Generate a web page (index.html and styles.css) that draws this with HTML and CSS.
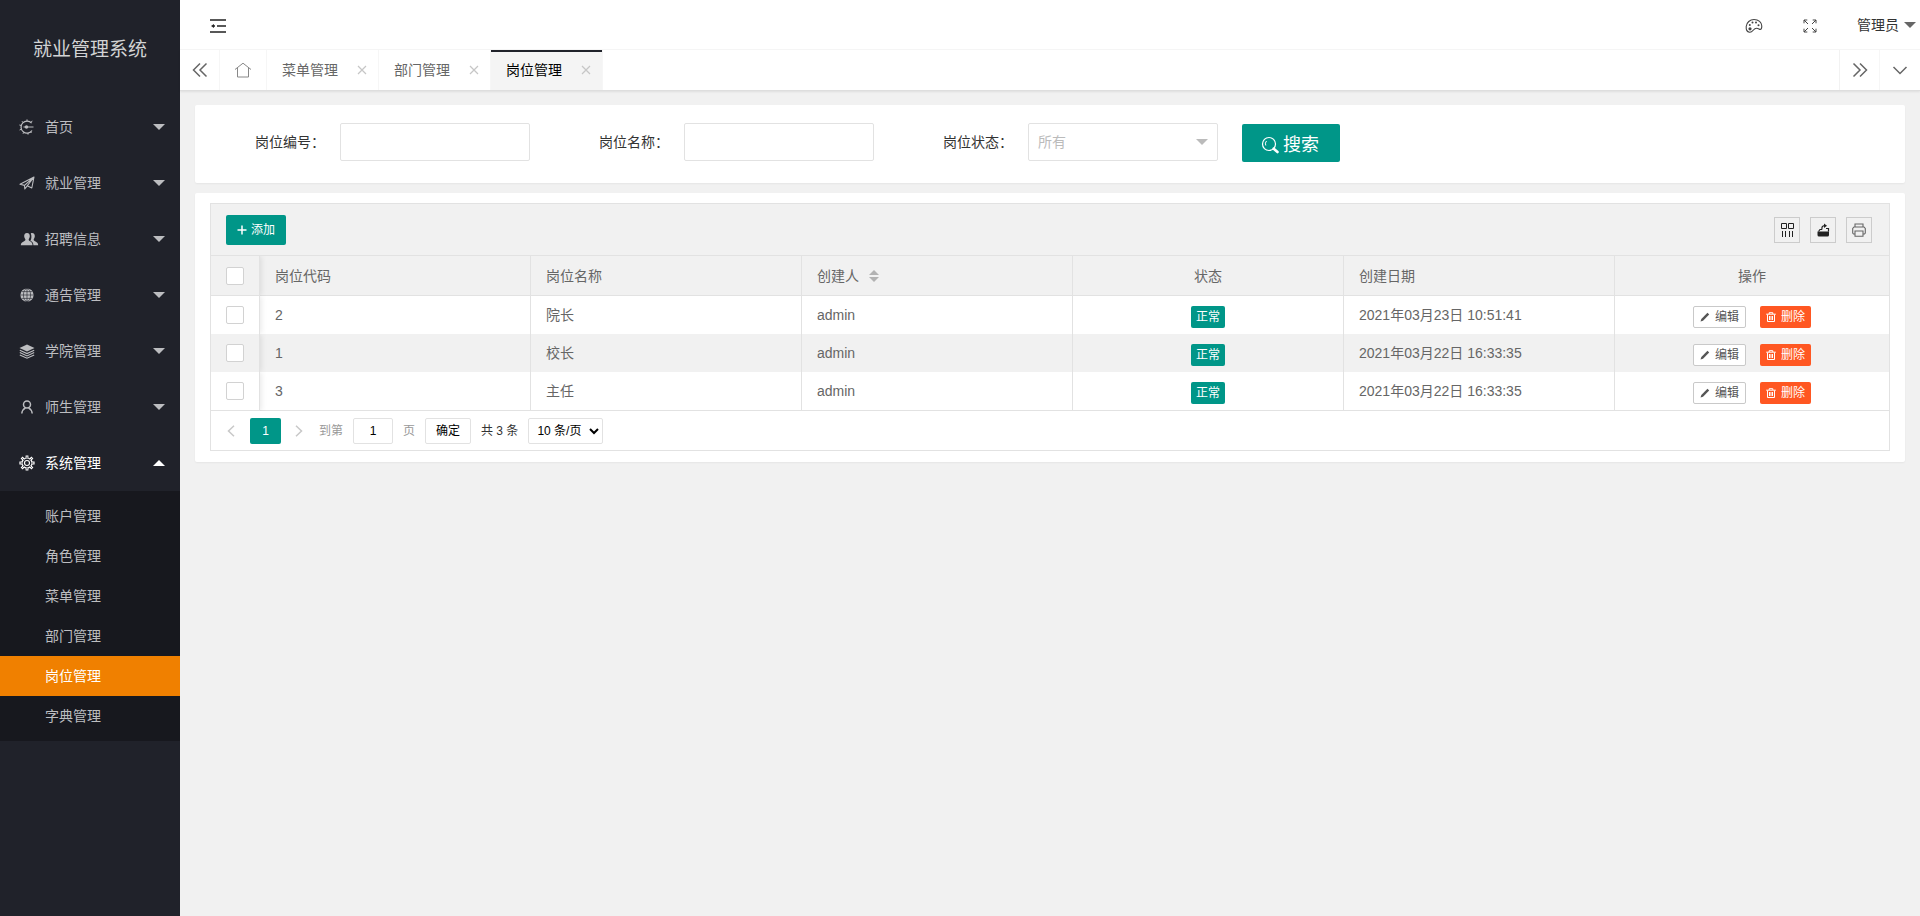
FILE: index.html
```html
<!DOCTYPE html>
<html lang="zh-CN">
<head>
<meta charset="utf-8">
<title>就业管理系统</title>
<link rel="stylesheet" href="styles.css">
</head>
<body>
<svg class="sprite" aria-hidden="true">
  <symbol id="i-home" viewBox="0 0 16 16"><path d="M12.600 4.200A6 6 0 1 0 13 11.500M4.500 8h10" fill="none" stroke="currentColor" stroke-width="1.200"/><path d="M8 .4v2M3 2.200l1 1.300M.4 6l1.800.5M.6 11l1.700-.8M4 14.800l.8-1.500M9 15.600v-1.800M13.200 1.800l-1 1.500M12.500 14l-1-1.200" stroke="currentColor"/><circle cx="7.500" cy="8" r="1.700" fill="currentColor"/></symbol>
  <symbol id="i-plane" viewBox="0 0 16 16"><path d="M1 9.300 15 2l-2.200 11-4.600-2.200L5.800 14l-.3-3.600zM5.500 10.400 15 2 8.200 10.800" fill="none" stroke="currentColor" stroke-width="1.100" stroke-linejoin="round"/></symbol>
  <symbol id="i-users" viewBox="0 0 20 16"><path d="M8 2c2.100 0 3 1.600 2.800 3.600-.1 1.200-.6 2-1.100 2.700 0 1 .2 1.500 1.300 2 1.500.7 2.500 1.700 2.500 4H1.800c0-2.500 1.500-3.100 3.300-4 1.100-.5 1.300-1 1.300-2-.6-.7-1.100-1.500-1.200-2.700C5 3.600 5.900 2 8 2z" fill="currentColor"/><path d="M11.800 2.400c.4-.3.700-.4 1.200-.4 2.100 0 3 1.600 2.800 3.600-.1 1.200-.6 2-1.100 2.700 0 1 .2 1.500 1.300 2 1.900.9 3.200 1.500 3.200 4h-4.800c0-2.300-1-3.600-3-4.500 1.200-1.800 1.400-5.400.4-7.400z" fill="currentColor"/></symbol>
  <symbol id="i-globe" viewBox="0 0 16 16"><circle cx="8" cy="8" r="6.600" fill="currentColor"/><path d="M8 1.400v13.200M1.400 8h13.200M2.500 4.600h11M2.500 11.400h11" stroke="#20222a" stroke-width=".6"/><ellipse cx="8" cy="8" rx="3.600" ry="6.500" fill="none" stroke="#20222a" stroke-width=".6"/></symbol>
  <symbol id="i-layers" viewBox="0 0 16 16"><path d="M8 1.500 15.500 5 8 8.500.5 5z" fill="currentColor"/><path d="m.8 7.300 7.200 3.300 7.200-3.300M.8 9.600 8 12.900l7.200-3.300M.8 11.900 8 15.200l7.200-3.300" fill="none" stroke="currentColor" stroke-width="1.100"/></symbol>
  <symbol id="i-user" viewBox="0 0 16 16"><circle cx="8" cy="5.500" r="3.500" fill="none" stroke="currentColor" stroke-width="1.500"/><path d="M2.800 14.500c.3-3 1.800-4.700 3.700-5.700M13.200 14.500c-.3-3-1.800-4.700-3.700-5.700" fill="none" stroke="currentColor" stroke-width="1.500"/></symbol>
  <symbol id="i-gear" viewBox="0 0 16 16"><path d="M8 .4v2.800M8 12.800v2.800M.4 8h2.800M12.800 8h2.800M2.600 2.600l2 2M11.400 11.400l2 2M2.600 13.400l2-2M11.400 4.600l2-2" stroke="currentColor" stroke-width="2.800"/><circle cx="8" cy="8" r="5" fill="none" stroke="currentColor" stroke-width="1.200"/><path d="M8 1.500v2M8 12.500v2M1.500 8h2M12.500 8h2M3.400 3.400l1.400 1.400M11.200 11.200l1.400 1.400M3.400 12.600l1.400-1.400M11.200 4.800l1.400-1.400" stroke="#20222a" stroke-width=".9"/><circle cx="8" cy="8" r="2.500" fill="none" stroke="currentColor" stroke-width="1.100"/></symbol>
  <symbol id="i-fold" viewBox="0 0 16 14"><path d="M0 1h16M7 7h9M0 13h16" stroke="currentColor" stroke-width="1.500"/><path d="M1 7l3-2v4zM3 6.300h2v1.400H3z" fill="currentColor"/></symbol>
  <symbol id="i-palette" viewBox="0 0 18 16"><path d="M4.500 14.200C1.800 13.800 1 11 1.200 8.500 1.500 4.500 5 1.500 9 1.500c4.500 0 7.800 3 7.800 6.500 0 2-.8 3.500-1.600 3.500-1 0-1.700-1.300-3.700-1.300-3.300 0-3.500 4.500-7 4z" fill="none" stroke="currentColor" stroke-width="1.100"/><circle cx="5" cy="10.800" r="1.600" fill="currentColor"/><circle cx="4.800" cy="7" r="1" fill="currentColor"/><circle cx="7.500" cy="4.500" r="1" fill="currentColor"/><circle cx="11" cy="4.500" r="1" fill="currentColor"/><circle cx="13.500" cy="7.300" r="1" fill="currentColor"/></symbol>
  <symbol id="i-full" viewBox="0 0 14 14"><path d="M1 4.300V1h3.300M1 1l4 4M9.700 1H13v3.300M13 1 9 5M1 9.700V13h3.300M1 13l4-4M13 9.700V13H9.700M13 13 9 9" fill="none" stroke="currentColor"/></symbol>
  <symbol id="i-dleft" viewBox="0 0 16 16"><path d="M8 1.500 1.500 8 8 14.500M14.500 1.500 8 8l6.500 6.500" fill="none" stroke="currentColor" stroke-width="1.500"/></symbol>
  <symbol id="i-down" viewBox="0 0 16 16"><path d="M1.500 5 8 11.500 14.500 5" fill="none" stroke="currentColor" stroke-width="1.500"/></symbol>
  <symbol id="i-house" viewBox="0 0 18 16"><path d="M1 7.500 9 1.200l8 6.300M3.500 6v9h11V6" fill="none" stroke="currentColor"/></symbol>
  <symbol id="i-search" viewBox="0 0 18 18"><circle cx="8" cy="8" r="6.500" fill="none" stroke="currentColor" stroke-width="1.200"/><path d="M4.800 9.500A4 4 0 0 1 5.500 5" fill="none" stroke="currentColor"/><path d="m12.700 12.700 3.800 3.300" stroke="currentColor" stroke-width="2.600" stroke-linecap="round"/></symbol>
  <symbol id="i-plus" viewBox="0 0 10 10"><path d="M5 .5v9M.5 5h9" stroke="currentColor" stroke-width="1.500"/></symbol>
  <symbol id="i-cols" viewBox="0 0 14 14"><path d="M1.500 .5h5v5h-5zM8.500 .5h5v5h-5zM2.500 8v6M5.500 8v6M9.500 8v6M12.500 8v6" fill="none" stroke="currentColor"/></symbol>
  <symbol id="i-export" viewBox="0 0 14 14"><path d="M1.500 8.500h11.500v3.500q0 1.500-1.500 1.500H3Q1.500 13.500 1.500 12z" fill="currentColor"/><path d="M2.500 8.500 4 6.500h2M12.500 8.500v-3h-2.500M6 6.500C5.500 4 6.500 2.800 8.500 2.600" fill="none" stroke="currentColor" stroke-width="1.200"/><path d="M8 .5 11 2.800 8 5z" fill="currentColor"/></symbol>
  <symbol id="i-print" viewBox="0 0 14 14"><path d="M3 4V1h8v3M3 11H1.500L.7 10V5.500L2 4h10l1.300 1.500V10l-.8 1H11M3 8h8v5.300H3z" fill="none" stroke="currentColor" stroke-width="1.100"/></symbol>
  <symbol id="i-edit" viewBox="0 0 10 10"><path d="M.5 9.500 1.300 7 7.500.8 9.200 2.500 3 8.700z" fill="currentColor"/></symbol>
  <symbol id="i-trash" viewBox="0 0 10 10"><path d="M.2 2.200h9.600M3.200 2V.7h3.600V2M1.500 2.500v7h7v-7M3.500 4v4M5 4v4M6.500 4v4" fill="none" stroke="currentColor" stroke-width="1"/></symbol>
  <symbol id="i-left" viewBox="0 0 8 12"><path d="M7 .8 1.500 6 7 11.200" fill="none" stroke="currentColor" stroke-width="1.500"/></symbol>
  <symbol id="i-x" viewBox="0 0 10 10"><path d="m1 1 8 8M9 1 1 9" stroke="currentColor" stroke-width="1.200"/></symbol>
</svg>
<div class="app">
  <aside class="side">
    <h1 class="logo">就业管理系统</h1>
    <nav class="menu">
      <a class="menu-item" href="#"><svg class="menu-icon"><use href="#i-home"/></svg>首页<i class="caret"></i></a>
      <a class="menu-item" href="#"><svg class="menu-icon"><use href="#i-plane"/></svg>就业管理<i class="caret"></i></a>
      <a class="menu-item" href="#"><svg class="menu-icon wide"><use href="#i-users"/></svg>招聘信息<i class="caret"></i></a>
      <a class="menu-item" href="#"><svg class="menu-icon"><use href="#i-globe"/></svg>通告管理<i class="caret"></i></a>
      <a class="menu-item" href="#"><svg class="menu-icon"><use href="#i-layers"/></svg>学院管理<i class="caret"></i></a>
      <a class="menu-item" href="#"><svg class="menu-icon"><use href="#i-user"/></svg>师生管理<i class="caret"></i></a>
      <a class="menu-item open" href="#"><svg class="menu-icon"><use href="#i-gear"/></svg>系统管理<i class="caret up"></i></a>
      <div class="submenu">
        <a class="sub-item" href="#">账户管理</a>
        <a class="sub-item" href="#">角色管理</a>
        <a class="sub-item" href="#">菜单管理</a>
        <a class="sub-item" href="#">部门管理</a>
        <a class="sub-item current" href="#">岗位管理</a>
        <a class="sub-item" href="#">字典管理</a>
      </div>
    </nav>
  </aside>
  <div class="main">
    <header class="header">
      <button class="icon-btn" aria-label="侧边伸缩"><svg class="s16 dark"><use href="#i-fold"/></svg></button>
      <div class="header-right">
        <button class="icon-btn" aria-label="主题"><svg class="s18"><use href="#i-palette"/></svg></button>
        <button class="icon-btn" aria-label="全屏"><svg class="s14"><use href="#i-full"/></svg></button>
        <a class="account" href="#">管理员<i class="caret"></i></a>
      </div>
    </header>
    <div class="tabs">
      <button class="tab-ctl" aria-label="向左"><svg class="s16"><use href="#i-dleft"/></svg></button>
      <button class="tab-ctl home" aria-label="首页"><svg class="s18"><use href="#i-house"/></svg></button>
      <div class="tab"><a href="#">菜单管理</a><button class="close" aria-label="关闭"><svg class="s10"><use href="#i-x"/></svg></button></div>
      <div class="tab"><a href="#">部门管理</a><button class="close" aria-label="关闭"><svg class="s10"><use href="#i-x"/></svg></button></div>
      <div class="tab active"><a href="#">岗位管理</a><button class="close" aria-label="关闭"><svg class="s10"><use href="#i-x"/></svg></button></div>
      <button class="tab-ctl right" aria-label="向右"><svg class="s16 flip"><use href="#i-dleft"/></svg></button>
      <button class="tab-ctl last" aria-label="更多"><svg class="s16"><use href="#i-down"/></svg></button>
    </div>
    <main class="content">
      <form class="card search">
        <div class="field"><label for="code">岗位编号：</label><input class="box" id="code" type="text"></div>
        <div class="field"><label for="name">岗位名称：</label><input class="box" id="name" type="text"></div>
        <div class="field"><label for="state">岗位状态：</label><div class="select-wrap"><select class="box" id="state"><option>所有</option></select><i class="caret"></i></div></div>
        <button class="search-btn" type="button"><svg class="s18"><use href="#i-search"/></svg>搜索</button>
      </form>
      <section class="card list">
        <div class="grid">
          <div class="toolbar">
            <button class="add-btn"><svg class="s10"><use href="#i-plus"/></svg>添加</button>
            <div class="tools">
              <button class="tool" aria-label="筛选列"><svg class="s14 dark"><use href="#i-cols"/></svg></button>
              <button class="tool" aria-label="导出"><svg class="s14 dark"><use href="#i-export"/></svg></button>
              <button class="tool" aria-label="打印"><svg class="s14"><use href="#i-print"/></svg></button>
            </div>
          </div>
          <table class="table">
            <colgroup><col class="c-check"><col class="c-std"><col class="c-std"><col class="c-std"><col class="c-std"><col class="c-std"><col></colgroup>
            <thead>
              <tr><th class="pick"><input class="check" type="checkbox" aria-label="全选"></th><th>岗位代码</th><th>岗位名称</th><th><span class="sortable">创建人<span class="sort"><i class="asc"></i><i class="desc"></i></span></span></th><th class="center">状态</th><th>创建日期</th><th class="center">操作</th></tr>
            </thead>
            <tbody>
              <tr><td class="pick"><input class="check" type="checkbox" aria-label="选择院长"></td><td>2</td><td>院长</td><td>admin</td><td class="acts"><div class="pair"><button class="xs ok">正常</button></div></td><td>2021年03月23日 10:51:41</td><td class="acts"><div class="pair"><button class="xs edit"><svg class="s10"><use href="#i-edit"/></svg>编辑</button><button class="xs del"><svg class="s10"><use href="#i-trash"/></svg>删除</button></div></td></tr>
              <tr><td class="pick"><input class="check" type="checkbox" aria-label="选择校长"></td><td>1</td><td>校长</td><td>admin</td><td class="acts"><div class="pair"><button class="xs ok">正常</button></div></td><td>2021年03月22日 16:33:35</td><td class="acts"><div class="pair"><button class="xs edit"><svg class="s10"><use href="#i-edit"/></svg>编辑</button><button class="xs del"><svg class="s10"><use href="#i-trash"/></svg>删除</button></div></td></tr>
              <tr><td class="pick"><input class="check" type="checkbox" aria-label="选择主任"></td><td>3</td><td>主任</td><td>admin</td><td class="acts"><div class="pair"><button class="xs ok">正常</button></div></td><td>2021年03月22日 16:33:35</td><td class="acts"><div class="pair"><button class="xs edit"><svg class="s10"><use href="#i-edit"/></svg>编辑</button><button class="xs del"><svg class="s10"><use href="#i-trash"/></svg>删除</button></div></td></tr>
            </tbody>
          </table>
          <div class="pager">
            <button class="arrow" aria-label="上一页"><svg class="s12"><use href="#i-left"/></svg></button>
            <button class="page-on">1</button>
            <button class="arrow" aria-label="下一页"><svg class="s12 flip"><use href="#i-left"/></svg></button>
            <label class="jump">到第<input type="text" value="1">页</label>
            <button class="go">确定</button>
            <span class="total">共 3 条</span>
            <select class="limit" aria-label="每页条数"><option>10 条/页</option></select>
          </div>
        </div>
      </section>
    </main>
  </div>
</div>
</body>
</html>
```

FILE: styles.css
```css
* { box-sizing: border-box; }
body { margin: 0; font: 14px/24px "Liberation Sans", "Noto Sans CJK SC", sans-serif; color: #333; background: #f1f1f1; }
a { color: inherit; text-decoration: none; }
button, input, select { font: inherit; color: inherit; margin: 0; }
button { background: none; border: 0; padding: 0; cursor: pointer; display: inline-flex; align-items: center; justify-content: center; }
.sprite { position: absolute; width: 0; height: 0; }
.s10 { width: 10px; height: 10px; }
.s12 { width: 12px; height: 12px; }
.s14 { width: 14px; height: 14px; }
.s16 { width: 16px; height: 16px; }
.s18 { width: 18px; height: 18px; }
.flip { transform: scaleX(-1); }
.dark { color: #222; }
.caret { border: 6px solid transparent; border-top-color: currentColor; border-bottom-width: 0; }
.caret.up { border-top-width: 0; border-bottom: 6px solid currentColor; }

.app { display: flex; min-height: 100vh; }
.side { width: 180px; flex: none; background: #20222a; color: #bcbdc0; }
.logo { margin: 0; height: 99px; display: flex; align-items: center; justify-content: center; font-size: 19px; font-weight: 400; color: #d2d3d4; }
.menu-item { display: flex; align-items: center; height: 56px; padding: 0 15px 0 19px; }
.menu-icon { width: 16px; height: 16px; margin-right: 10px; }
.menu-icon.wide { width: 20px; margin-right: 6px; }
.menu-item .caret { margin-left: auto; }
.menu-item.open, .sub-item.current { color: #fff; }
.submenu { background: #17181e; padding: 5px 0; }
.sub-item { display: block; padding-left: 45px; line-height: 40px; }
.sub-item.current { background: #f08000; }

.main { flex: 1; min-width: 0; }
.header { display: flex; justify-content: space-between; height: 50px; padding: 0 4px 0 30px; background: #fff; border-bottom: 1px solid #f6f6f6; }
.header-right { display: flex; align-items: center; gap: 40px; }
.header .icon-btn { padding-top: 2px; color: #444; }
.account { display: flex; align-items: center; gap: 5px; }
.account .caret { color: #666; }
.tabs { display: flex; height: 41px; background: #fff; border-bottom: 1px solid #dedede; box-shadow: 0 1px 2px rgba(0, 0, 0, .08); color: #666; }
.tab-ctl { width: 40px; border-right: 1px solid #f6f6f6; }
.tab-ctl.home { width: 47px; color: #888; }
.tab-ctl.right { margin-left: auto; width: 41px; border-left: 1px solid #f2f2f2; }
.tab-ctl.last { width: 40px; border: 0; }
.tab { display: flex; align-items: center; justify-content: space-between; width: 112px; padding: 0 11px 0 15px; border-right: 1px solid #f6f6f6; }
.tab.active { background: #f4f4f4; color: #000; box-shadow: inset 0 2px #20222a; }
.close { color: #c6c6c6; }

.content { padding: 14px 15px; display: flex; flex-direction: column; gap: 10px; }
.card { background: #fff; border-radius: 2px; box-shadow: 0 1px 2px rgba(0, 0, 0, .05); }
.search { display: flex; align-items: center; padding: 17px 60px 21px; gap: 69px; }
.field { display: flex; align-items: center; gap: 15px; }
.field label { width: 70px; white-space: nowrap; }
.box { width: 190px; height: 38px; padding: 0 10px; border: 1px solid #e2e2e2; border-radius: 2px; background: #fff; outline: 0; }
.select-wrap { position: relative; color: #bbb; }
.select-wrap .box { appearance: none; display: block; padding: 0 9px; }
.select-wrap .caret { position: absolute; right: 10px; top: 16px; pointer-events: none; }
.search-btn { width: 98px; height: 38px; margin: 2px 0 0 -45px; padding: 4px 2px 0 0; gap: 4px; border-radius: 2px; background: #009688; color: #fff; font-size: 18px; }

.list { padding: 10px 15px 11px; }
.grid { border: 1px solid #e2e2e2; }
.toolbar { display: flex; align-items: center; justify-content: space-between; height: 52px; padding: 0 17px 0 15px; background: #f1f1f1; border-bottom: 1px solid #e2e2e2; }
.add-btn { width: 60px; height: 30px; gap: 4px; border-radius: 2px; background: #009688; color: #fff; font-size: 12px; }
.tools { display: flex; gap: 10px; }
.tool { width: 26px; height: 26px; border: 1px solid #ccc; color: #666; }
.table { width: 100%; table-layout: fixed; border-collapse: separate; border-spacing: 0; color: #666; }
.c-check { width: 49px; }
.c-std { width: 271px; }
th, td { height: 38px; padding: 0 15px; text-align: left; font-weight: 400; line-height: 28px; border-right: 1px solid #e2e2e2; }
th { height: 40px; background: #f1f1f1; border-bottom: 1px solid #e2e2e2; }
th:last-child, td:last-child { border-right: 0; }
tbody tr:nth-child(even) { background: #f1f1f1; }
tbody tr:last-child td { height: 39px; border-bottom: 1px solid #e2e2e2; }
.pick { box-shadow: 1px 0 6px rgba(0, 0, 0, .1); clip-path: inset(0 -8px 0 0); }
.check { appearance: none; display: block; width: 18px; height: 18px; border: 1px solid #d2d2d2; border-radius: 2px; background: #fff; }
th.center { text-align: center; }
.acts { padding-top: 4px; }
.pair { display: flex; justify-content: center; gap: 14px; }
.xs { height: 22px; padding: 0 5px; gap: 5px; border-radius: 2px; font-size: 12px; line-height: 22px; color: #fff; }
.ok { background: #009688; }
.edit { width: 53px; border: 1px solid #c9c9c9; background: #fff; color: #555; }
.del { width: 51px; background: #ff5722; }
.sortable { display: inline-flex; align-items: center; gap: 10px; }
.sort { display: flex; flex-direction: column; gap: 2px; }
.asc, .desc { border: 5px solid transparent; }
.asc { border-top: 0; border-bottom-color: #b2b2b2; }
.desc { border-bottom: 0; border-top-color: #b2b2b2; }

.pager { display: flex; align-items: center; height: 39px; padding: 0 14px; font-size: 12px; color: #333; }
.arrow { width: 12px; color: #c8c8c8; }
.page-on { width: 31px; height: 26px; margin: 0 12px 0 13px; border-radius: 2px; background: #009688; color: #fff; }
.jump { display: flex; align-items: center; gap: 10px; margin-left: 14px; color: #999; }
.jump input { width: 40px; height: 26px; padding: 0; text-align: center; border: 1px solid #e2e2e2; border-radius: 2px; color: #000; }
.go { width: 46px; height: 26px; margin: 0 10px; border: 1px solid #e2e2e2; border-radius: 2px; color: #000; }
.limit { width: 75px; height: 26px; margin-left: 10px; padding: 0 4px; border: 1px solid #e2e2e2; border-radius: 2px; background: #fff; color: #000; }
```
